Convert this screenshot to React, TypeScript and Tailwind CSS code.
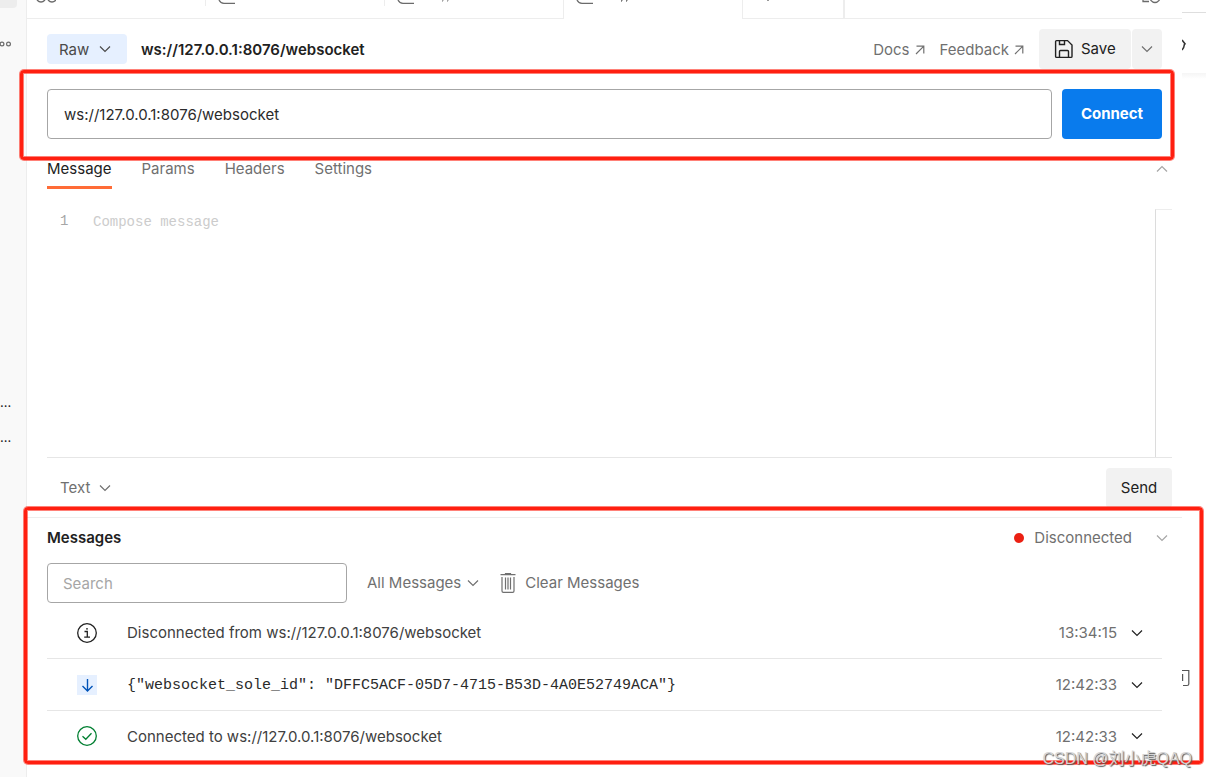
import React from "react";

type IconProps = { className?: string };

function Chevron({ className = "" }: IconProps) {
  return (
    <svg className={`h-3 w-3 shrink-0 ${className}`} viewBox="0 0 12 12" fill="none" stroke="currentColor" strokeWidth="1.2" aria-hidden="true">
      <path d="M1 3.500 6 8.500 11 3.500" />
    </svg>
  );
}

function ArrowOut() {
  return (
    <svg className="h-[10px] w-[10px] shrink-0" viewBox="0 0 10 10" fill="none" stroke="currentColor" strokeWidth="1.2" aria-hidden="true">
      <path d="M1.500 1.200H8.800V8.500M8.600 1.400 1 9" />
    </svg>
  );
}

function SaveIcon() {
  return (
    <svg className="h-5 w-5 shrink-0" viewBox="0 0 20 20" fill="none" stroke="currentColor" strokeWidth="1.4" aria-hidden="true">
      <path d="M2.600 1.600H13.500L18 6V17.400Q18 18.400 17 18.400H2.600Q1.600 18.400 1.600 17.400V2.600Q1.600 1.600 2.600 1.600Z" />
      <path d="M5.500 1.600V5.500H10.500V1.600M5.500 18.400V12.500Q5.500 11.500 6.500 11.500H13.500Q14.500 11.500 14.500 12.500V18.400" />
    </svg>
  );
}

function TrashIcon() {
  return (
    <svg className="h-5 w-4 shrink-0" viewBox="0 0 16 20" fill="none" stroke="currentColor" strokeWidth="1.2" aria-hidden="true">
      <path d="M.5 1.600H15.500M5.500 1.500V.6H10.500V1.500M2 4V18Q2 19.300 3.300 19.300H12.700Q14 19.300 14 18V4M5.500 4.500V16.500M8 4.500V16.500M10.500 4.500V16.500" />
    </svg>
  );
}

function InfoIcon() {
  return (
    <svg className="h-5 w-5 text-[#212121]" viewBox="0 0 20 20" fill="none" stroke="currentColor" strokeWidth="1.3" aria-hidden="true">
      <circle cx="10" cy="10" r="9.300" />
      <path d="M7.500 8.500H10.300V14M7.200 14.200H13" />
      <circle cx="10" cy="5.800" r=".9" fill="currentColor" stroke="none" />
    </svg>
  );
}

function DownIcon() {
  return (
    <span className="flex h-5 w-5 items-center justify-center bg-[#e6f0ff]">
      <svg className="h-5 w-5 text-[#0053b8]" viewBox="0 0 20 20" fill="none" stroke="currentColor" strokeWidth="1.4" aria-hidden="true">
        <path d="M10.500 4V16M5.500 11 10.500 16 15.500 11" />
      </svg>
    </span>
  );
}

function CheckIcon() {
  return (
    <svg className="h-5 w-5 text-[#007f31]" viewBox="0 0 20 20" fill="none" stroke="currentColor" strokeWidth="1.3" aria-hidden="true">
      <circle cx="10" cy="10" r="9.300" />
      <path d="M5.500 10.200 8.800 13.300 14.500 7.200" />
    </svg>
  );
}

function SocketTabIcon() {
  return (
    <svg className="h-[5px] w-5" viewBox="0 0 20 5" fill="none" stroke="#6b6b6b" strokeWidth="1.3" aria-hidden="true">
      <path d="M1 0Q2.500 3.300 6 3.300H17" />
    </svg>
  );
}

function Frame({ className }: { className: string }) {
  return (
    <div
      aria-hidden="true"
      className={`pointer-events-none absolute z-10 rounded-[4px] border-[3px] border-[#ff1f10] shadow-[0_0_0_1px_#ff1f1090,inset_0_0_0_1px_#ff1f1090] ${className}`}
    />
  );
}

const tabs = ["Message", "Params", "Headers", "Settings"];

const rows = [
  { icon: <InfoIcon />, text: "Disconnected from ws://127.0.0.1:8076/websocket", time: "13:34:15", mono: false },
  { icon: <DownIcon />, text: '{"websocket_sole_id": "DFFC5ACF-05D7-4715-B53D-4A0E52749ACA"}', time: "12:42:33", mono: true },
  { icon: <CheckIcon />, text: "Connected to ws://127.0.0.1:8076/websocket", time: "12:42:33", mono: false },
];

export default function App() {
  return (
    <div className="relative flex min-h-screen overflow-hidden bg-white font-['Inter',sans-serif] text-[15px] leading-5 text-[#707070]">
      <aside className="flex w-[27px] shrink-0 flex-col border-r border-[#ededed] bg-[#f9f9f9]">
        <div className="h-2 w-[17px] rounded-br bg-[#ededed]" />
        <svg className="mt-8 h-2 w-3" viewBox="0 0 12 8" fill="none" stroke="#6b6b6b" strokeWidth="1.2" aria-hidden="true">
          <circle cx="2" cy="4" r="1.900" />
          <circle cx="8.500" cy="4" r="1.900" />
        </svg>
        <span className="mt-[344px] h-[35px] text-[13px] text-[#212121]">...</span>
        <span className="text-[13px] text-[#212121]">...</span>
      </aside>

      <main className="flex min-w-0 flex-1 flex-col">
        <div className="flex h-[19px] shrink-0">
          <div className="flex w-[179px] items-start border-b border-[#ededed]">
            <svg className="ml-[9px] h-[5px] w-5" viewBox="0 0 20 5" fill="none" stroke="#6b6b6b" strokeWidth="1.4" aria-hidden="true">
              <path d="M1 0Q5 4 9 0M12 0Q16 4 20 0" />
            </svg>
            <span className="ml-auto h-[6px] w-px bg-[#ededed]" />
          </div>
          <div className="flex w-[179px] items-start border-b border-[#ededed] pl-3">
            <SocketTabIcon />
            <span className="ml-auto h-[6px] w-px bg-[#ededed]" />
          </div>
          <div className="flex w-[179px] items-start border-r border-b border-[#ededed] pl-3">
            <SocketTabIcon />
            <svg className="ml-6 h-[2px] w-[10px]" viewBox="0 0 10 2" stroke="#777" aria-hidden="true">
              <path d="M1.500 1.500 2 0M6.500 1.500 7 0" />
            </svg>
          </div>
          <div className="flex w-[178px] items-start pl-3">
            <SocketTabIcon />
            <svg className="ml-6 h-[2px] w-[10px]" viewBox="0 0 10 2" stroke="#333" aria-hidden="true">
              <path d="M1.500 1.500 2 0M6.500 1.500 7 0" />
            </svg>
          </div>
          <div className="flex w-[103px] items-start border-r-2 border-b border-l border-[#ededed] pl-6">
            <span className="h-px w-[2px] bg-[#999]" />
          </div>
          <div className="flex flex-1 items-start justify-end border-b border-[#ededed] pr-5">
            <svg className="h-[4px] w-5" viewBox="0 0 20 4" fill="none" stroke="#6b6b6b" strokeWidth="1.3" aria-hidden="true">
              <path d="M1 0V1.500H7M8.500 0Q13 5 17.500 0" />
            </svg>
          </div>
        </div>

        <header className="flex items-center px-5 pt-[10px]">
          <button type="button" className="flex h-[30px] w-20 items-center justify-between rounded bg-[#e6f0ff] pr-4 pl-3 text-[#4a4a4a]">
            <span className="pt-[2px]">Raw</span>
            <Chevron />
          </button>
          <h1 className="ml-[14px] pt-[2px] font-semibold text-[#212121]">ws://127.0.0.1:8076/websocket</h1>
          <nav className="mr-[15px] ml-auto flex gap-[15px] pt-[2px]">
            <a href="#docs" className="flex items-center gap-[5px]">Docs <ArrowOut /></a>
            <a href="#feedback" className="flex items-center gap-[5px]">Feedback <ArrowOut /></a>
          </nav>
          <button type="button" className="flex h-10 w-[92px] items-center gap-[7px] rounded bg-[#f2f2f2] pl-[15px] text-[#212121]">
            <SaveIcon />
            Save
          </button>
          <button type="button" aria-label="More save options" className="ml-px flex h-10 w-[30px] items-center justify-center rounded bg-[#f2f2f2]">
            <Chevron />
          </button>
        </header>

        <div className="relative mx-5 mt-5 flex gap-[10px]">
          <input
            aria-label="Server URL"
            defaultValue="ws://127.0.0.1:8076/websocket"
            className="h-[50px] min-w-0 flex-1 rounded border border-[#a6a6a6] px-4 text-[#2b2b2b] outline-none"
          />
          <button type="button" className="h-[50px] w-[100px] rounded bg-[#097bed] font-bold text-white">Connect</button>
          <Frame className="-top-[19px] -right-[12px] -bottom-[21px] -left-[27px]" />
        </div>

        <div className="mx-5 mt-[10px] flex h-10 gap-[30px]">
          {tabs.map((tab, i) => (
            <button
              key={tab}
              type="button"
              className={
                i === 0
                  ? "border-b-[3px] border-[#ff6c37] pt-[2px] text-[#212121]"
                  : "border-b-[3px] border-transparent pt-[2px]"
              }
            >
              {tab}
            </button>
          ))}
          <button type="button" aria-label="Collapse request" className="-mr-[6px] ml-auto text-[#a6a6a6]">
            <Chevron className="rotate-180" />
          </button>
        </div>

        <div className="mt-5 mr-[10px] ml-5 flex h-[249px] border-b border-[#e6e6e6] font-['Liberation_Mono',monospace] text-sm">
          <span className="mt-[2px] w-[46px] pl-[13px] text-[#a6a6a6]">1</span>
          <textarea
            aria-label="Message"
            placeholder="Compose message"
            className="mt-[3px] flex-1 resize-none outline-none placeholder:text-[#cccccc]"
          />
          <div className="w-[17px] border-t border-l border-t-[#ededed] border-l-[#dcdcdc]" />
        </div>

        <div className="mr-[10px] ml-5 flex h-[59px] items-start justify-between pt-[10px]">
          <button type="button" className="flex h-10 items-center gap-[9px] pl-[13px]">
            Text
            <Chevron />
          </button>
          <button type="button" className="h-10 w-[66px] rounded bg-[#f2f2f2] text-[#212121]">Send</button>
        </div>

        <section className="relative border-t border-[#ededed] px-5">
          <Frame className="-top-[11px] -right-[21px] -bottom-[3px] -left-[3px]" />
          <div className="flex h-10 items-center">
            <h2 className="font-semibold text-[#212121]">Messages</h2>
            <span className="mr-[10px] ml-auto h-[10px] w-[10px] rounded-full bg-[#eb2013]" />
            Disconnected
            <button type="button" aria-label="Collapse messages" className="-mr-[6px] ml-6 text-[#a6a6a6]">
              <Chevron />
            </button>
          </div>
          <div className="mt-[5px] flex items-center">
            <input
              type="search"
              aria-label="Search messages"
              placeholder="Search"
              className="h-10 w-[300px] rounded border border-[#a6a6a6] px-[15px] outline-none placeholder:text-[#a6a6a6]"
            />
            <button type="button" className="ml-5 flex items-center gap-[6px]">
              All Messages
              <Chevron />
            </button>
            <button type="button" className="ml-[21px] flex items-center gap-[9px]">
              <TrashIcon />
              Clear Messages
            </button>
          </div>
          <ul className="mt-1">
            {rows.map((row) => (
              <li key={row.text} className="flex h-[52px] items-center border-b border-[#e6e6e6] px-[30px] last:h-[50px] last:border-b-0">
                {row.icon}
                <span
                  className={
                    row.mono
                      ? "ml-[30px] pt-[2px] font-['Liberation_Mono',monospace] text-[#2b2b2b]"
                      : "ml-[30px] pt-px text-[#404040]"
                  }
                >
                  {row.text}
                </span>
                <time className="ml-auto pt-px">{row.time}</time>
                <button type="button" aria-label="Expand message" className="-mr-[11px] ml-[14px] text-[#212121]">
                  <Chevron />
                </button>
              </li>
            ))}
          </ul>
        </section>
      </main>

      <aside className="flex w-6 shrink-0 flex-col overflow-hidden">
        <div className="h-[13px] border-b border-[#dedede]" />
        <div className="h-[60px] pt-[26px]">
          <svg className="h-3 w-[6px]" viewBox="0 0 6 12" fill="none" stroke="#333" strokeWidth="1.6" aria-hidden="true">
            <path d="M0 1 3.500 5.500M0 11Q2 9 2.500 5" />
          </svg>
        </div>
        <div className="h-[6px] bg-linear-to-b from-[#f5f5f5] to-white" />
        <svg className="mt-[590px] h-[18px] w-2" viewBox="0 0 8 18" fill="none" stroke="#555" strokeWidth="1.2" aria-hidden="true">
          <path d="M0 1.500H6.800V15Q6.800 16.500 5 16.500H1M.6 5V12" />
        </svg>
      </aside>

      <p className="pointer-events-none absolute right-[14px] bottom-[6px] z-20 font-['Liberation_Sans','Noto_Sans_CJK_SC',sans-serif] text-base text-[#d4d4d4] [text-shadow:1px_1px_1px_#555]">
        CSDN @刘小虎QAQ
      </p>
    </div>
  );
}
